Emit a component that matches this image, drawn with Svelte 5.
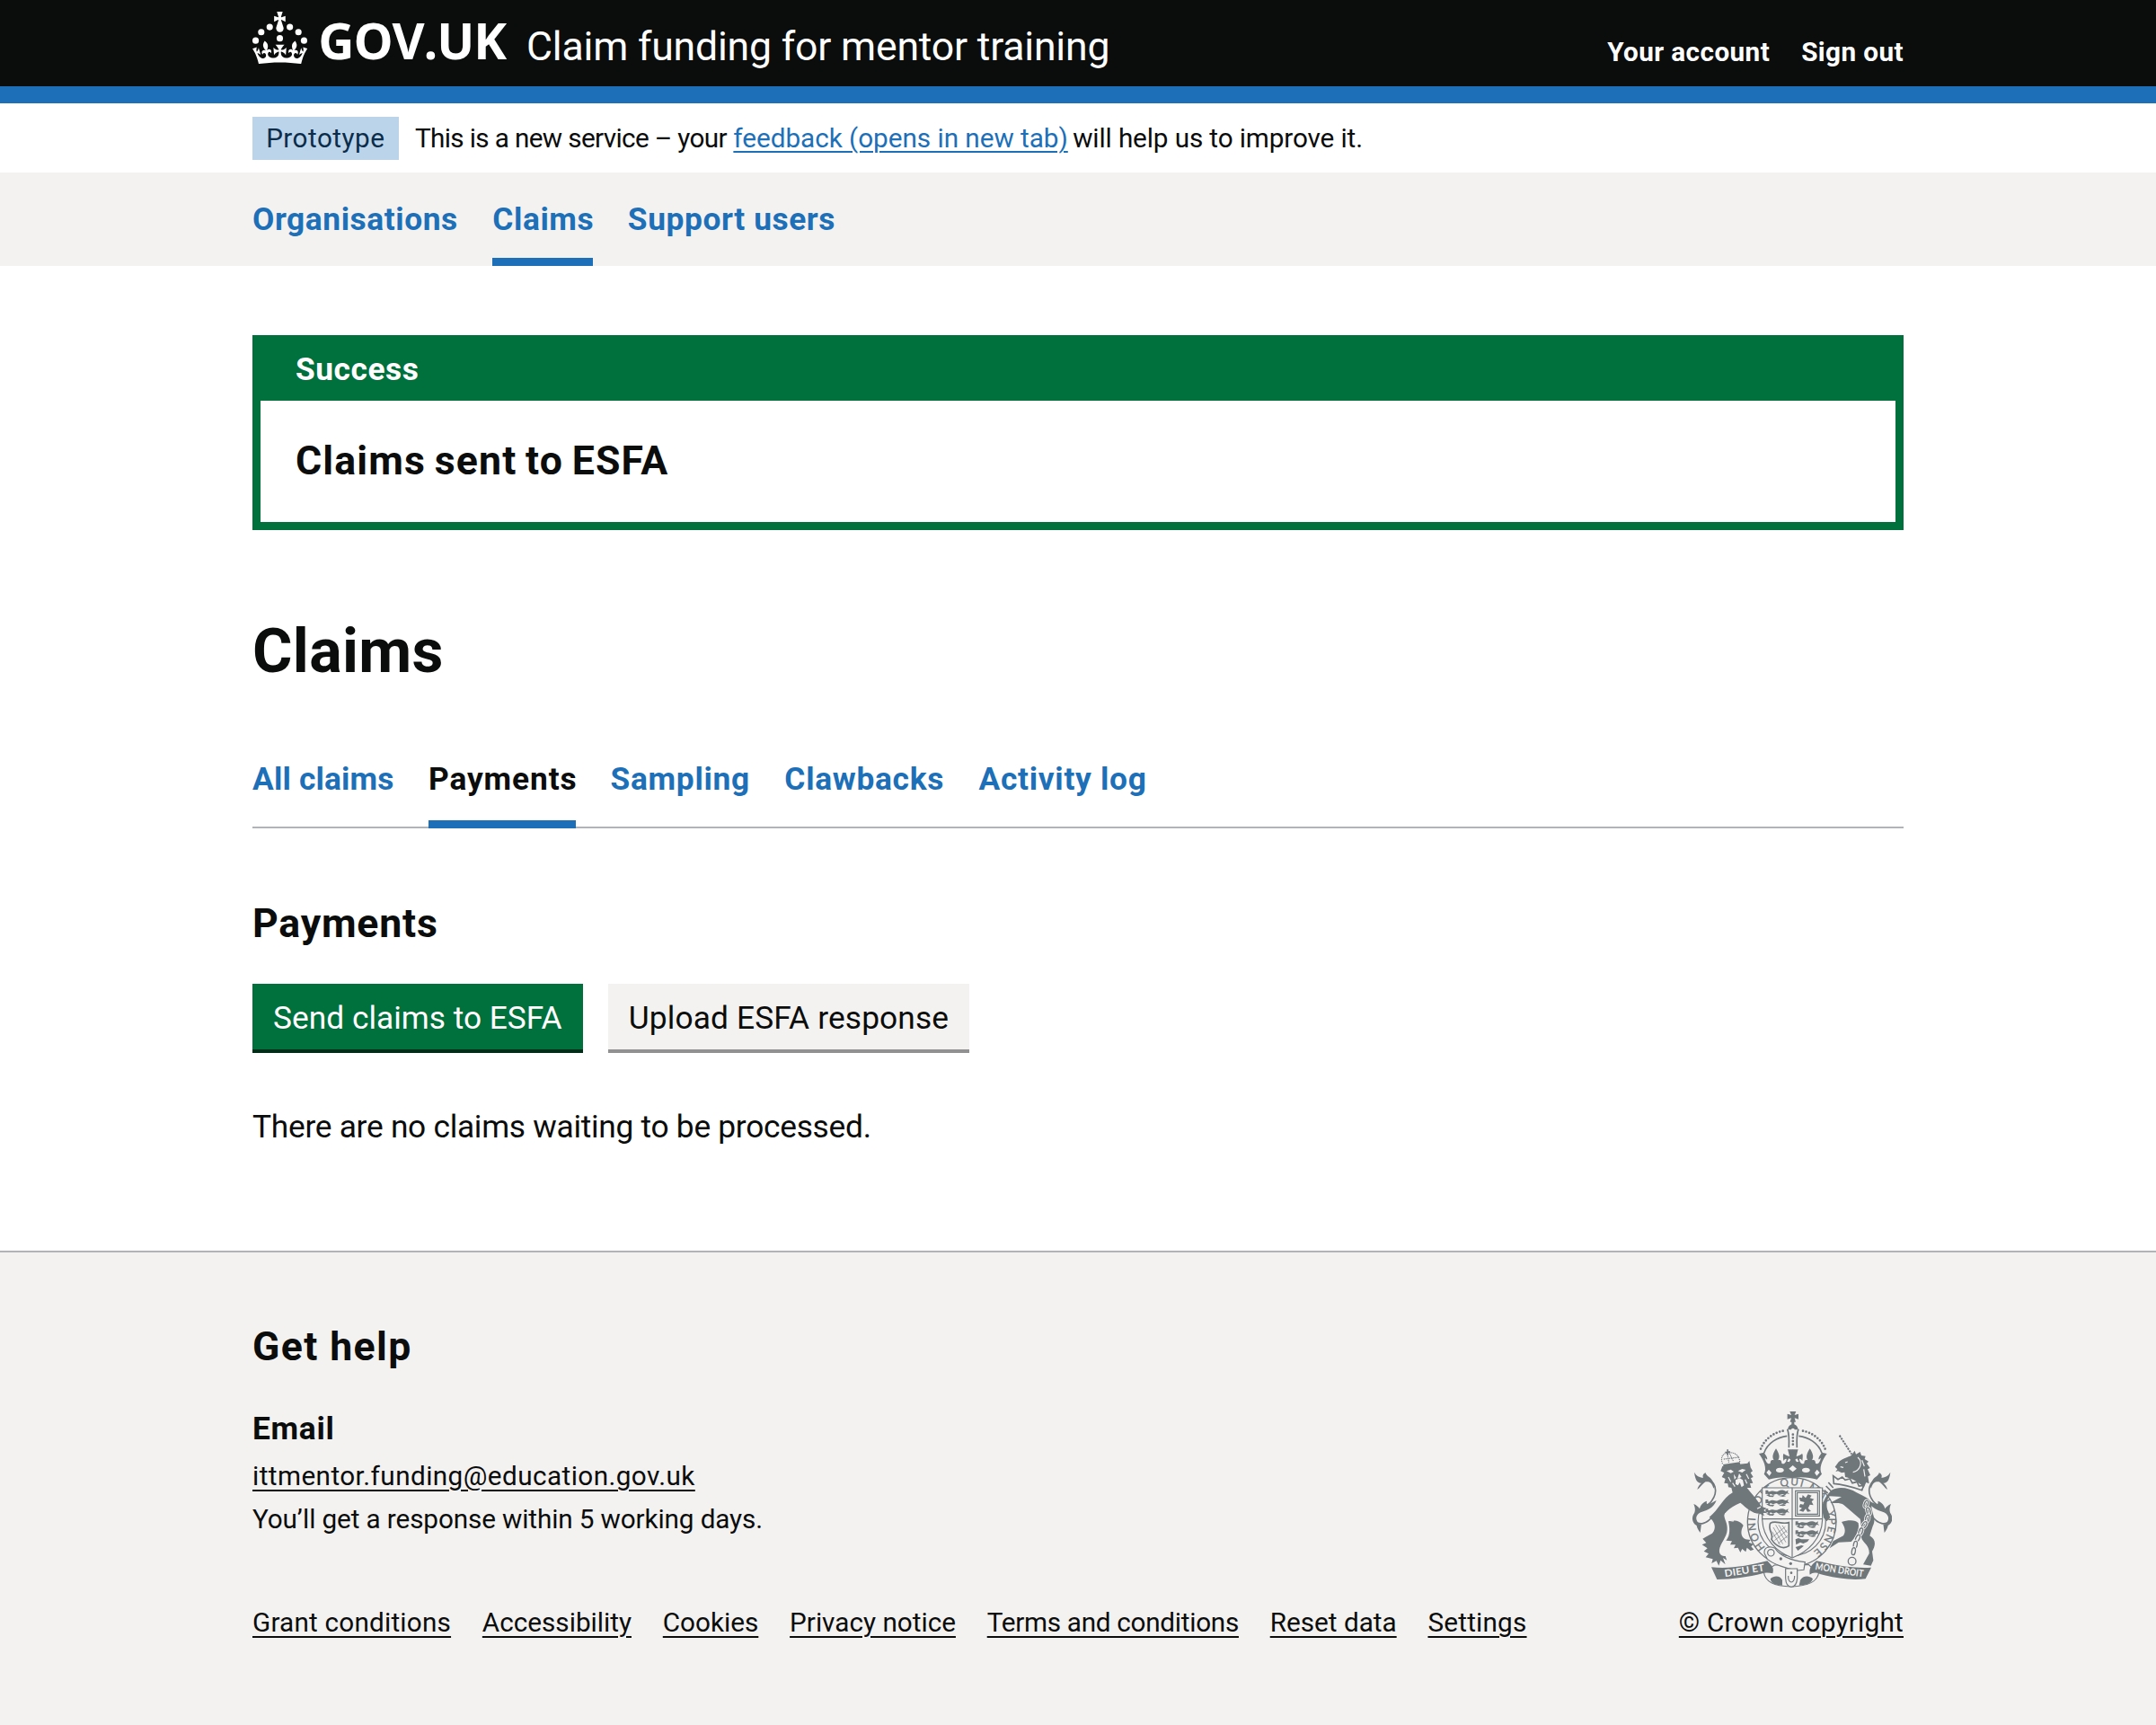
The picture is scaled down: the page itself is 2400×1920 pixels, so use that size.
<script>
  const primaryNav = [
    { label: 'Organisations' },
    { label: 'Claims', current: true },
    { label: 'Support users' }
  ];
  const secondaryNav = [
    { label: 'All claims', tone: 'tight' },
    { label: 'Payments', current: true },
    { label: 'Sampling' },
    { label: 'Clawbacks' },
    { label: 'Activity log' }
  ];
  const footerLinks = [
    { label: 'Grant conditions', tone: 'loose' },
    { label: 'Accessibility' },
    { label: 'Cookies' },
    { label: 'Privacy notice' },
    { label: 'Terms and conditions', tone: 'narrow' },
    { label: 'Reset data' },
    { label: 'Settings', tone: 'loose' }
  ];
  const chain = [
    [682, 372, 20], [690, 396, -20], [686, 420, 15], [676, 442, 30], [664, 464, 20],
    [654, 486, 25], [646, 508, 10], [640, 530, 10]
  ];
</script>

{#snippet charge(x, y)}
  <g transform="translate({x} {y})">
    <path d="M2 2h9v5h5c8-7 18 3 28-2s16-4 26 1l8-4-2 7 6 6-9-2-6 6-8-4-12 3-9-4-11 4-8-4-5 4-5-4-7 1z" />
    <path d="M4 18l10-2 4 4 14-1-5 6-12-1zM42 17l10 3 10-3 8 5-10 2-10-2z" />
  </g>
{/snippet}

<div class="page">
  <header class="header">
    <div class="container header-row">
      <svg class="crown" viewBox="0 0 63.4 60.4" preserveAspectRatio="none" aria-hidden="true">
        <circle cx="20" cy="17.6" r="3.7" /><circle cx="10.2" cy="23.5" r="3.7" />
        <circle cx="3.7" cy="33.2" r="3.7" /><circle cx="31.7" cy="30.6" r="3.7" />
        <circle cx="43.3" cy="17.6" r="3.7" /><circle cx="53.2" cy="23.5" r="3.7" />
        <circle cx="59.7" cy="33.2" r="3.7" />
        <path d="M33.1,9.8c.2-.1.3-.3.5-.5l4.6,2.4v-6.8l-4.6,1.5c-.1-.2-.3-.3-.5-.5l1.9-5.9h-6.7l1.9,5.9c-.2.1-.3.3-.5.5l-4.6-1.5v6.8l4.6-2.4c.1.2.3.3.5.5l-2.6,8c-.9,2.8,1.2,5.7,4.1,5.7h0c3,0,5.1-2.9,4.1-5.7l-2.6-8ZM37,37.9s-3.4,3.8-4.1,6.1c2.2,0,4.2-.5,6.4-2.8l-.7,8.5c-2-2.8-4.4-4.1-5.7-3.8.1,3.1.5,6.7,5.8,7.2,3.7.3,6.7-1.5,7-3.8.4-2.6-2-4.3-3.7-1.6-1.4-4.5,2.4-6.1,4.9-3.2-1.9-4.5-1.8-7.7,2.4-10.9,3,4,2.6,7.3-1.2,11.1,2.4-1.3,6.2,0,4,4.6-1.2-2.8-3.7-2.2-4.2.2-.3,1.7.7,3.7,3,4.2,1.9.3,4.7-.9,7-5.9-1.3,0-2.4.7-3.9,1.7l2.4-8c.6,2.3,1.4,3.7,2.2,4.5.6-1.6.5-2.8,0-5.3l5,1.8c-2.6,3.6-5.2,8.7-7.3,17.5-7.4-1.1-15.7-1.7-24.5-1.7h0c-8.8,0-17.1.6-24.5,1.7-2.1-8.9-4.7-13.9-7.3-17.5l5-1.8c-.5,2.5-.6,3.7,0,5.3.8-.8,1.6-2.3,2.2-4.5l2.4,8c-1.5-1-2.6-1.7-3.9-1.7,2.3,5,5.2,6.2,7,5.9,2.3-.4,3.3-2.4,3-4.2-.5-2.4-3-3.1-4.2-.2-2.2-4.6,1.6-6,4-4.6-3.7-3.7-4.2-7.1-1.2-11.1,4.2,3.2,4.3,6.4,2.4,10.9,2.5-2.8,6.3-1.3,4.9,3.2-1.8-2.7-4.1-1-3.7,1.6.3,2.3,3.3,4.1,7,3.8,5.4-.5,5.7-4.2,5.8-7.2-1.3-.2-3.7,1-5.7,3.8l-.7-8.5c2.2,2.3,4.2,2.7,6.4,2.8-.7-2.3-4.1-6.1-4.1-6.1h10.6,0Z" />
      </svg>
      <span class="logotype">GOV.UK</span>
      <span class="service">Claim funding for mentor training</span>
      <nav class="account">
        <a href="#account">Your account</a>
        <a href="#signout">Sign out</a>
      </nav>
    </div>
  </header>

  <div class="container phase">
    <strong class="tag">Prototype</strong>
    <p class="phase-text">
      <span class="lead">This is a new service – your</span>
      <a href="#feedback">feedback (opens in new tab)</a>
      <span class="trail">will help us to improve it.</span>
    </p>
  </div>

  <nav class="primary">
    <ul class="container">
      {#each primaryNav as item}
        <li class:current={item.current}><a href="#nav">{item.label}</a></li>
      {/each}
    </ul>
  </nav>

  <main class="container">
    <section class="banner">
      <h2 class="banner-title">Success</h2>
      <p class="banner-body">Claims sent to ESFA</p>
    </section>

    <h1>Claims</h1>

    <ul class="secondary">
      {#each secondaryNav as item}
        <li class:current={item.current} class={item.tone}><a href="#tab">{item.label}</a></li>
      {/each}
    </ul>

    <h2 class="section-title">Payments</h2>
    <div class="buttons">
      <button class="send">Send claims to ESFA</button>
      <button class="upload">Upload ESFA response</button>
    </div>
    <p class="empty">There are no claims waiting to be processed.</p>
  </main>

  <footer class="footer">
    <div class="container footer-row">
      <div class="meta">
        <h2 class="help">Get help</h2>
        <h3>Email</h3>
        <p class="mail"><a href="#mail">ittmentor.funding@education.gov.uk</a></p>
        <p class="reply">You’ll get a response within 5 working days.</p>
        <ul class="links">
          {#each footerLinks as link}
            <li class={link.tone}><a href="#footer">{link.label}</a></li>
          {/each}
        </ul>
      </div>

      <div class="copyright">
        <svg class="arms" viewBox="102 63 666 588" aria-hidden="true">
          <defs>
            <path id="garter" d="M434 554A122 122 0 1 1 434.1 554" />
            <g id="tail">
              <path class="line" d="M170 412C150 440 122 446 110 426C98 398 146 388 166 362C190 330 178 292 146 288" />
              <path d="M108 266C116 280 128 284 138 284C134 276 140 270 146 268C148 278 158 280 166 290C174 302 178 312 172 320C168 300 156 296 146 298C134 306 126 320 118 324C120 314 126 306 132 302C120 302 112 296 108 266z" />
              <path d="M106 372C116 376 122 382 126 388C128 376 138 366 150 362C148 370 150 372 154 372C166 370 174 364 182 360C172 386 150 394 134 398C118 402 112 416 116 426C120 438 126 440 132 440C130 448 130 456 128 468C120 458 116 448 116 444C102 436 98 420 106 406C112 396 112 386 106 372z" />
            </g>
            <g id="arch">
              <path class="beads" d="M404 128C372 134 338 158 327 197" />
              <path class="line" d="M418 145C386 149 352 168 341 202" />
              <path class="line" d="M419 122C426 140 425 160 424 184" />
              <path d="M324 204L341 200C346 208 352 214 352 222C350 226 348 220 344 218C348 236 356 240 362 236C362 228 366 222 374 226C366 214 372 202 381 187C390 202 396 214 388 226C396 222 400 228 400 236C408 242 416 232 416 222C412 220 408 226 406 228C404 214 404 206 407 204C412 208 418 212 426 213C424 204 422 196 420 190L438 190V284C402 280 380 284 357 290L341 272C352 254 340 226 324 204z" />
            </g>
          </defs>

          <!-- Imperial crown -->
          <path d="M427 63h21l-5 12 13-4v18l-13-4 4 13h-5v8c10 4 13 12 12 18h-33c-1-6 2-14 12-18v-8h-5l4-13-13 4V71l13 4z" />
          <use href="#arch" />
          <use href="#arch" transform="matrix(-1 0 0 1 875 0)" />
          <path class="beads" d="M437.500 140V184" />
          <circle class="cut" cx="437.500" cy="125" r="6" />
          <path class="cut" d="M437 243l13 11-13 11-13-11zM357 257l9 11-7 10-10-11zM518 257l9 10-10 11-7-10zM424 220l6 4-5 8-7-2zM451 220l-6 4 5 8 7-2z" />
          <ellipse class="cut" cx="394" cy="259" rx="13" ry="8" />
          <ellipse class="cut" cx="481" cy="259" rx="13" ry="8" />

          <!-- Garter and shield -->
          <circle class="ring" cx="434" cy="432" r="148" />
          <circle class="ring thin" cx="434" cy="432" r="113" />
          <text class="motto"><textPath href="#garter" startOffset="98">HONI SOIT</textPath></text>
          <text class="motto"><textPath href="#garter" startOffset="345">QUI MAL Y</textPath></text>
          <text class="motto"><textPath href="#garter" startOffset="562">PENSE</textPath></text>
          <path class="ring thin" d="M335 318H536V424C534 488 488 532 435 552C382 532 338 488 335 424z" />
          <path class="line thin" d="M435 318V550M335 422H536" />
          {@render charge(344, 324)}
          {@render charge(344, 355)}
          {@render charge(344, 386)}
          <path class="line thin" d="M446 328H526V412H446zM452 334H520V406H452z" />
          <path d="M470 342l10 10 8-12 12 4-6 8 14 4-8 8 6 12-12-2-6 12 10 10-12 2-6-10-8 10-14-4 10-8-10-4 4-10 10 2 4-8-14-4-4-12 10 2z" />
          {@render charge(444, 428)}
          {@render charge(444, 458)}
          <path d="M446 490l10-4 10 4 26 0-6 8-14 6-10-4-14 8zM446 516l20-6 8 2-20 16z" />
          <path class="line" d="M362 436C380 424 398 442 424 434V512C404 526 380 512 366 490C374 472 352 458 362 436z" />
          <path class="line hair" d="M372 450L404 506M380 442L414 500M390 442L418 486M368 464L394 508M402 444L418 468M370 482L412 448M376 494L418 460M388 504L420 478" />

          <!-- Lion -->
          <path d="M202 246L286 236L292 228L296 250L303 262L296 268L305 282L297 286L304 302L294 303L298 318L284 318C302 340 320 360 332 380L349 386L340 393L350 402L338 402L342 412L326 404C300 404 282 384 262 368C250 374 222 384 208 408C208 424 220 436 218 458C218 480 194 506 192 524C190 540 200 546 212 546L217 560L204 552L212 574L196 560L190 578L182 562L166 570L170 556L146 550L156 538L140 530L152 520L134 508L148 502L136 488L150 480L168 470C184 452 176 430 158 416C190 392 204 350 236 334L232 318L222 316L220 304L208 302L212 288L200 282L208 268L196 262z" />
          <path d="M222 430C244 424 264 430 272 444C262 462 262 482 280 490L296 492L290 500L306 506L298 514L307 524L296 528L284 518L280 532L268 522L262 534L254 518L240 520L246 508L228 508L234 496L214 494C230 476 226 450 222 430z" />
          <path class="cut" d="M216 262l14-5 10 7-10 5zM254 262l14-7 12 3-12 9zM240 272l8 12-6 6zM258 270l8 12-14 6zM246 292l14-6 10 6 4 18-8 6-6-16-6 10-8-4z" />
          <path class="cutline" d="M222 282L230 298M282 272L290 288M278 290L284 304M236 302L244 314M212 402C214 420 228 432 240 428M330 382L318 388" />
          <path d="M204 240L260 232L263 246L208 254z" />
          <path class="beads small" d="M202 236C194 214 206 202 218 202C236 196 258 206 260 230M218 202L224 236M224 200L240 232M208 222L256 216" />
          <path d="M217 190h5v6h6v5h-6v8h-5v-7h-6v-5h6z" />
          <use href="#tail" />

          <!-- Unicorn -->
          <path class="horn" d="M593 143L634 206" />
          <path d="M578 248L590 232C606 218 622 216 632 210L644 194L648 206L662 198L666 210L680 212L677 222L690 230L684 236L695 252L687 256L696 276L688 280L692 304L682 300L674 318C660 298 630 286 612 282L610 266L600 268L588 262L580 264L586 256z" />
          <path class="cutline" d="M654 216C674 234 660 262 638 266M612 234L620 231M596 248L606 250M668 226L676 246M674 256L678 280" />
          <path class="line" d="M572 278L588 290L602 282L612 292L628 288L636 302L652 298L658 312L674 310L668 326C638 316 606 306 574 304z" />
          <path d="M537 402C530 372 546 346 566 326C590 312 626 318 650 334C676 348 704 354 700 384C704 410 716 424 704 446L694 478C716 492 714 510 702 530L706 560L698 578L672 574L684 552L692 538C694 514 678 506 668 490C660 470 668 440 662 422L608 376C594 364 574 372 562 368L600 348L560 346C548 360 548 384 556 398L562 418L550 430L540 418z" />
          <path d="M600 432C622 424 648 424 656 436C662 462 640 492 632 498L590 500L560 520L572 496L606 478C616 462 610 448 600 432z" />
          <use href="#tail" transform="matrix(-1 0 0 1 871 0)" />
          {#each chain as [x, y, tilt]}
            <ellipse class="halo" cx={x} cy={y} rx="6" ry="12" transform="rotate({tilt} {x} {y})" />
            <ellipse class="link" cx={x} cy={y} rx="6" ry="12" transform="rotate({tilt} {x} {y})" />
          {/each}
          <circle class="link" cx="635" cy="563" r="13" />
          <path class="line" d="M556 300L572 318M548 312L566 330M542 326L554 336" />

          <!-- Buckle and scrolls -->
          <path class="ring thin" d="M340 600C346 632 372 646 432 648C494 646 520 630 524 600C508 590 498 584 490 574L376 576z" />
          <path d="M362 622C376 608 396 612 402 626L402 644C380 642 364 638 362 622zM504 622C490 608 470 612 462 626L458 644C482 642 500 638 504 622z" />
          <path class="ring thin" d="M342 536C340 514 362 512 378 520C394 544 430 560 478 566L474 592L452 594C412 588 372 572 352 556z" />
          <circle class="line thin" cx="364" cy="535" r="11" />
          <circle cx="397" cy="555" r="5" /><circle cx="430" cy="571" r="5" />
          <path class="ring thin" d="M413 588H452V620C450 644 440 649 432 649C422 648 414 642 413 620z" />
          <path class="line thin" d="M422 612C420 640 444 640 443 612" />
          <circle cx="432" cy="602" r="4" />
          <path d="M165 583C225 590 290 578 352 562C366 578 376 584 370 604C360 602 346 600 336 604C290 616 236 624 184 624z" />
          <path d="M699 584C640 588 580 576 516 562C502 574 490 584 494 608C504 600 516 600 528 606C572 618 626 628 680 622z" />
          <text class="scroll" transform="translate(211 616) rotate(-9)" textLength="134" lengthAdjust="spacingAndGlyphs">DIEU ET</text>
          <text class="scroll" transform="translate(511 591) rotate(9)" textLength="162" lengthAdjust="spacingAndGlyphs">MON DROIT</text>
        </svg>
        <a class="crown-link" href="#copyright">© Crown copyright</a>
      </div>
    </div>
  </footer>
</div>

<style>
  :global(body) {
    margin: 0;
    background: #fff;
  }
  .page {
    display: flex;
    flex-direction: column;
    height: 1920px;
    overflow: hidden;
    color: #0b0c0c;
    font: 400 29.7px/48px Roboto, 'Liberation Sans', sans-serif;
    white-space: nowrap;
  }
  h1, h2, h3, p, ul {
    margin: 0;
    padding: 0;
  }
  ul {
    list-style: none;
  }
  a {
    color: inherit;
    text-decoration: none;
  }
  .container {
    box-sizing: border-box;
    width: 1838px;
    margin: 0 auto;
  }

  .header {
    height: 95.5px;
    border-bottom: 19px solid #1d70b8;
    background: #0b0c0c;
    color: #fff;
  }
  .header-row {
    display: flex;
    align-items: flex-start;
  }
  .crown {
    width: 61px;
    height: 58.5px;
    margin-top: 12.5px;
    fill: #fff;
  }
  .logotype {
    margin: 15px 0 0 12.3px;
    width: 231.7px;
    font: 700 55.6px/60px 'Open Sans', 'Liberation Sans', sans-serif;
    letter-spacing: -0.02em;
  }
  .service {
    margin-top: 21.5px;
    font-size: 44.6px;
    line-height: 60px;
    letter-spacing: -0.0045em;
  }
  .account {
    display: flex;
    gap: 35px;
    margin: 33.5px 0 0 auto;
    font-weight: 700;
    letter-spacing: 0.014em;
  }

  .phase {
    display: flex;
    align-items: center;
    gap: 18.5px;
    height: 77px;
    padding-top: 2px;
  }
  .tag {
    box-sizing: border-box;
    width: 162.5px;
    height: 48px;
    background: #bbd4ea;
    color: #0c2d4a;
    font-weight: 400;
    line-height: 47px;
    letter-spacing: 0.016em;
    text-align: center;
  }
  .phase-text a {
    color: #1d70b8;
    text-decoration: underline 2px;
    text-underline-offset: 4px;
    letter-spacing: -0.001em;
  }
  .lead {
    letter-spacing: -0.0215em;
  }
  .trail {
    margin-left: -2px;
    letter-spacing: -0.004em;
  }

  .primary {
    height: 104.5px;
    background: #f3f2f1;
  }
  .primary ul {
    display: flex;
    gap: 38.5px;
    height: 100%;
  }
  .primary li,
  .secondary li {
    box-sizing: border-box;
    color: #1d70b8;
    font-size: 35.3px;
    font-weight: 700;
    line-height: 50px;
    letter-spacing: 0.02em;
  }
  .primary li {
    padding-top: 27px;
    letter-spacing: 0.0165em;
  }
  .current {
    border-bottom: 9px solid #1d70b8;
  }
  .primary .current {
    width: 112px;
  }

  .banner {
    box-sizing: border-box;
    height: 217px;
    margin-top: 77px;
    padding: 0 9px 9px;
    background: #00703c;
  }
  .banner-title {
    height: 73px;
    padding-left: 39px;
    color: #fff;
    font-size: 35.3px;
    line-height: 76px;
    letter-spacing: 0.0156em;
  }
  .banner-body {
    height: 135px;
    padding-left: 39px;
    background: #fff;
    font-size: 44.6px;
    font-weight: 700;
    line-height: 134px;
    letter-spacing: 0.0262em;
    word-spacing: -0.06em;
  }
  h1 {
    margin-top: 95px;
    font-size: 68px;
    line-height: 80px;
    letter-spacing: 0.005em;
  }
  .secondary {
    display: flex;
    gap: 38.5px;
    height: 80px;
    margin-top: 77px;
    box-shadow: inset 0 -2px #b1b4b6;
  }
  .secondary .current {
    width: 164px;
    color: #0b0c0c;
    letter-spacing: 0.025em;
  }
  .secondary .tight {
    width: 157.5px;
    letter-spacing: 0.005em;
  }
  .section-title,
  .help {
    font-size: 44.6px;
    line-height: 56px;
    letter-spacing: 0.018em;
  }
  .help {
    letter-spacing: 0.031em;
  }
  .section-title {
    margin-top: 78px;
  }
  .buttons {
    display: flex;
    gap: 28.5px;
    margin-top: 39px;
  }
  button {
    height: 73px;
    padding: 3px 0 0;
    border: 0;
    font: inherit;
    font-size: 35.3px;
    line-height: 70px;
  }
  .send {
    width: 367.5px;
    background: #00703c;
    box-shadow: 0 4px #002d18;
    color: #fff;
  }
  .upload {
    width: 402px;
    background: #f3f2f1;
    box-shadow: 0 4px #929191;
    color: #0b0c0c;
    letter-spacing: 0.004em;
  }
  .empty {
    margin-top: 60.5px;
    font-size: 35.3px;
    line-height: 50px;
    letter-spacing: -0.0078em;
  }

  .footer {
    flex: 1;
    margin-top: 113px;
    border-top: 2px solid #b1b4b6;
    background: #f3f2f1;
  }
  .footer-row {
    display: flex;
    justify-content: space-between;
    align-items: flex-end;
    padding-top: 77px;
  }
  h3 {
    margin-top: 38px;
    font-size: 35.3px;
    line-height: 50px;
    letter-spacing: 0.02em;
  }
  .mail {
    margin-top: 4px;
    letter-spacing: 0.0145em;
  }
  .reply {
    letter-spacing: -0.004em;
  }
  .links {
    display: flex;
    gap: 34.8px;
    margin-top: 67px;
  }
  .links .loose {
    letter-spacing: 0.007em;
  }
  .links .narrow {
    letter-spacing: -0.0095em;
  }
  .mail a,
  .links a,
  .crown-link {
    text-decoration: underline 2px;
    text-underline-offset: 5px;
  }
  .copyright {
    display: flex;
    flex-direction: column;
    align-items: center;
    gap: 15px;
    letter-spacing: 0.0086em;
  }

  .arms {
    width: 222px;
    height: 196px;
    margin-left: 2px;
    fill: #6f777b;
    letter-spacing: 0;
  }
  .line,
  .link,
  .halo,
  .horn,
  .beads {
    fill: none;
    stroke: #6f777b;
    stroke-width: 5;
  }
  .beads {
    stroke-width: 8;
    stroke-linecap: round;
    stroke-dasharray: 0 11;
  }
  .small {
    stroke-width: 4;
    stroke-dasharray: 0 6;
  }
  .horn {
    stroke-width: 6;
    stroke-dasharray: 7 3;
  }
  .link {
    stroke-width: 4;
  }
  .halo {
    stroke: #f3f2f1;
    stroke-width: 9;
  }
  .ring {
    fill: #f3f2f1;
    stroke: #6f777b;
    stroke-width: 4;
  }
  .thin {
    stroke-width: 3.5;
  }
  .hair {
    stroke-width: 2;
  }
  .cut {
    fill: #f3f2f1;
  }
  .cutline {
    fill: none;
    stroke: #f3f2f1;
    stroke-width: 3.5;
  }
  .motto {
    font: 400 35px Lato, sans-serif;
    letter-spacing: 5px;
    stroke: #6f777b;
    stroke-width: 0.8;
  }
  .scroll {
    fill: #f3f2f1;
    font: 700 33px Lato, sans-serif;
  }
</style>
